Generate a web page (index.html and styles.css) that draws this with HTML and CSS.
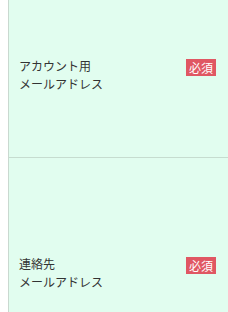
FILE: index.html
```html
<!DOCTYPE html>
<html lang="ja">
<head>
    <meta charset="UTF-8">
    <meta name="viewport" content="width=device-width, initial-scale=1.0">
    <title>登録フォーム</title>
    <link rel="stylesheet" href="styles.css">
</head>
<body>
    <div class="form-table">
        <div class="form-row first">
            <div class="label">アカウント用<br>メールアドレス</div>
            <span class="required">必須</span>
        </div>
        <div class="form-row second">
            <div class="label">連絡先<br>メールアドレス</div>
            <span class="required">必須</span>
        </div>
    </div>
</body>
</html>
```

FILE: styles.css
```css
body {
    margin: 0;
    background-color: #ffffff;
    font-family: "Noto Sans CJK JP", "Noto Sans", sans-serif;
}
.form-table {
    margin-left: 8px;
    border-left: 1px solid #c9d9d0;
}
.form-row {
    display: flex;
    justify-content: space-between;
    align-items: flex-start;
    background-color: #e1fdef;
    padding: 0 12px 0 10px;
    box-sizing: border-box;
}
.form-row.first {
    height: 158px;
    padding-top: 57px;
    border-bottom: 1px solid #c6dccf;
}
.form-row.second {
    height: 154px;
    padding-top: 97px;
}
.label {
    font-size: 12px;
    line-height: 18px;
    color: #333333;
}
.required {
    margin-top: 2px;
    padding: 0 3px;
    background-color: #e05763;
    color: #ffffff;
    font-size: 12px;
    line-height: 17px;
}
```
